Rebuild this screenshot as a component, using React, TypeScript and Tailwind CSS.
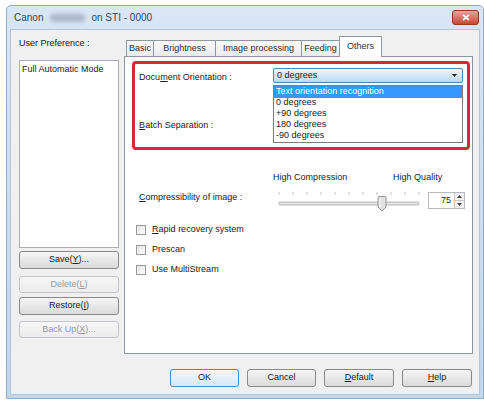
import React from 'react'

const font = "font-['Liberation_Sans',Arial,sans-serif]"

function PushButton({ children, disabled, isDefault, className = '' }: { children: React.ReactNode; disabled?: boolean; isDefault?: boolean; className?: string }) {
  const tone = disabled
    ? 'border-[#c2c6ca] bg-gradient-to-b from-[#f7f7f7] to-[#ececec] text-[#9a9a9a]'
    : isDefault
      ? 'border-[#4e8cc0] bg-gradient-to-b from-[#f2f8fc] to-[#d6e8f5] text-[#222]'
      : 'border-[#8a8a8a] bg-gradient-to-b from-[#f6f6f6] to-[#dadada] text-[#222]'
  return (
    <div className={`flex items-center justify-center rounded-[3px] border text-[9px] ${tone} ${className}`}>
      {children}
    </div>
  )
}

function Key({ children }: { children: React.ReactNode }) {
  return <span className="underline decoration-1 underline-offset-1">{children}</span>
}

function Tab({ label, w, active }: { label: string; w: string; active?: boolean }) {
  if (active) {
    return (
      <div className={`relative z-10 -mb-px flex h-[21px] ${w} items-center justify-center border border-b-0 border-[#8e979f] bg-white text-[9px] text-[#333]`}>
        {label}
      </div>
    )
  }
  return (
    <div className={`flex h-[16px] ${w} items-center justify-center border-l border-t border-[#8e979f] bg-gradient-to-b from-[#fafafa] to-[#ebebeb] text-[9px] text-[#333]`}>
      {label}
    </div>
  )
}

function Check({ children }: { children: React.ReactNode }) {
  return (
    <div className="flex h-[20px] items-center gap-[6px] text-[9px] text-[#222]">
      <div className="h-[10px] w-[10px] border border-[#9a9a9a] bg-gradient-to-br from-[#e6e6e6] to-[#fbfbfb]" />
      <span>{children}</span>
    </div>
  )
}

// Compression slider: groove, ticks and thumb at 75
function Slider() {
  const ticks = Array.from({ length: 11 }, (_, i) => 6 + i * 14)
  return (
    <svg width="150" height="26" viewBox="0 0 150 26">
      {ticks.map((x) => (
        <line key={x} x1={x} y1="5" x2={x} y2="8" stroke="#c4c4c4" strokeWidth="1" />
      ))}
      <rect x="6" y="15" width="140" height="3" rx="1" fill="#e6e6e6" stroke="#a8a8a8" strokeWidth="0.8" />
      <path d="M105 10.5 Q105 9.5 106 9.5 H112 Q113 9.5 113 10.5 V20 L109 24 L105 20 Z" fill="#e2e2e2" stroke="#8c8c8c" strokeWidth="0.9" />
      <line x1="107" y1="12" x2="107" y2="20" stroke="#fafafa" strokeWidth="1" />
    </svg>
  )
}

function SpinBox() {
  return (
    <div className="flex h-[17px] w-[37px] border border-[#b5b9bf] bg-white">
      <div className="flex flex-1 items-center justify-end pr-[3px] text-[9px] text-[#222]">75</div>
      <div className="flex w-[10px] flex-col border-l border-[#c8c8c8]">
        <div className="flex flex-1 items-center justify-center border-b border-[#c8c8c8] bg-[#f1f1f1]">
          <svg width="5" height="3" viewBox="0 0 5 3"><path d="M0 3 L2.5 0 L5 3 Z" fill="#444" /></svg>
        </div>
        <div className="flex flex-1 items-center justify-center bg-[#f1f1f1]">
          <svg width="5" height="3" viewBox="0 0 5 3"><path d="M0 0 L2.5 3 L5 0 Z" fill="#444" /></svg>
        </div>
      </div>
    </div>
  )
}

const orientations = ['0 degrees', '+90 degrees', '180 degrees', '-90 degrees']

export default function App() {
  return (
    <div className={`h-[401px] w-[484px] overflow-hidden bg-white pl-[6px] pt-[5px] ${font}`}>
      <div className="flex h-[394px] w-[478px] flex-col rounded-t-[5px] border border-[#8eaccb] bg-gradient-to-b from-[#d9e6f4] to-[#c2d6ec]">
        {/* title bar */}
        <div className="flex h-[23px] shrink-0 items-center justify-between pl-[7px] pr-[4px]">
          <div className="flex items-center text-[10px] text-[#34475e]">
            <span>Canon</span>
            <span className="ml-[7px] h-[8px] w-[35px] rounded-sm bg-[#a9b7c6] blur-[2px]" />
            <span className="ml-[6px]">on STI - 0000</span>
          </div>
          <div className="flex h-[15px] w-[27px] items-center justify-center rounded-[3px] border border-[#8e3a2c] bg-gradient-to-b from-[#eaa495] to-[#c54633]">
            <svg width="8" height="7" viewBox="0 0 8 7">
              <path d="M1 0.8 L7 6.2 M7 0.8 L1 6.2" stroke="#fff" strokeWidth="1.8" />
            </svg>
          </div>
        </div>

        {/* dialog body */}
        <div className="mx-[3px] mb-[3px] flex flex-1 flex-col border border-[#b3c5d8] bg-[#f0f0f0] pl-[8px] pr-[6px]">
          <div className="flex items-start">
            {/* user preference column */}
            <div className="flex w-[101px] flex-col pt-[6px]">
              <div className="h-[14px] text-[9px] leading-[14px] text-[#222]">User Preference :</div>
              <div className="mt-[10px] h-[188px] border border-[#a9adb3] bg-white px-[2px] pt-[2px] text-[9px] text-[#222]">
                Full Automatic Mode
              </div>
              <PushButton className="mt-[3px] h-[18px]">Save(<Key>Y</Key>)...</PushButton>
              <PushButton disabled className="mt-[7px] h-[17px]">Delete(<Key>L</Key>)</PushButton>
              <PushButton className="mt-[4px] h-[18px]">Restore(<Key>I</Key>)</PushButton>
              <PushButton disabled className="mt-[6px] h-[17px]">Back Up(<Key>X</Key>)...</PushButton>
            </div>

            {/* tab control */}
            <div className="ml-[5px] flex w-[352px] flex-col pt-[5px]">
              <div className="flex h-[21px] items-end pl-[2px]">
                <Tab label="Basic" w="w-[27px]" />
                <Tab label="Brightness" w="w-[62px]" />
                <Tab label="Image processing" w="w-[86px]" />
                <Tab label="Feeding" w="w-[38px]" />
                <Tab label="Others" active w="w-[43px]" />
              </div>
              <div className="flex h-[298px] flex-col border border-[#8e979f] bg-white">
                {/* highlighted orientation / separation group */}
                <div className="ml-[7px] mt-[4px] h-[89px] w-[338px] rounded-[4px] border-[3px] border-[#d42a32]">
                  <div className="flex pl-[4px] pt-[4px]">
                    <div className="w-[134px] pt-[3px] text-[9px] text-[#222]">
                      Docu<Key>m</Key>ent Orientation :
                    </div>
                    <div className="relative">
                      <div className="flex h-[15px] w-[190px] items-center justify-between rounded-[2px] border border-[#4f86b8] bg-gradient-to-b from-[#eef6fd] to-[#b9daf3] pl-[3px] pr-[5px]">
                        <span className="text-[9px] text-[#222]">0 degrees</span>
                        <svg width="5" height="3" viewBox="0 0 5 3"><path d="M0 0 L2.5 3 L5 0 Z" fill="#222" /></svg>
                      </div>
                      <div className="absolute left-0 top-full z-20 w-[190px] border border-[#7d7d7d] bg-white text-[9px] text-[#222]">
                        <div className="flex h-[12px] items-center bg-[#3399ff] pl-[2px] text-white">Text orientation recognition</div>
                        {orientations.map((o) => (
                          <div key={o} className="flex h-[11px] items-center pl-[2px]">{o}</div>
                        ))}
                      </div>
                    </div>
                  </div>
                  <div className="mt-[34px] pl-[4px] text-[9px] text-[#222]">
                    <Key>B</Key>atch Separation :
                  </div>
                </div>

                {/* compression */}
                <div className="mt-[22px] flex">
                  <div className="w-[148px] pl-[14px] pt-[19px] text-[9px] text-[#222]">
                    <Key>C</Key>ompressibility of image :
                  </div>
                  <div className="flex flex-col">
                    <div className="flex h-[12px] items-center text-[9px] text-[#222]">
                      <span className="w-[120px]">High Compression</span>
                      <span>High Quality</span>
                    </div>
                    <div className="flex items-start">
                      <div className="mt-[3px]">
                        <Slider />
                      </div>
                      <div className="ml-[5px] mt-[8px]">
                        <SpinBox />
                      </div>
                    </div>
                  </div>
                </div>

                <div className="mt-[7px] flex flex-col pl-[11px]">
                  <Check><Key>R</Key>apid recovery system</Check>
                  <Check>Prescan</Check>
                  <Check>Use MultiStream</Check>
                </div>
              </div>
            </div>
          </div>

          {/* dialog buttons */}
          <div className="mt-[15px] flex justify-end gap-[8px] pr-[1px]">
            <PushButton isDefault className="h-[18px] w-[69px]">OK</PushButton>
            <PushButton className="h-[18px] w-[69px]">Cancel</PushButton>
            <PushButton className="h-[18px] w-[70px]"><Key>D</Key>efault</PushButton>
            <PushButton className="h-[18px] w-[70px]"><Key>H</Key>elp</PushButton>
          </div>
        </div>
      </div>
    </div>
  )
}
